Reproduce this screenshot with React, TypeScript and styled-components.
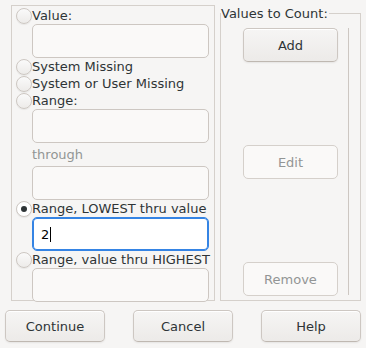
import React from "react";
import styled, { createGlobalStyle } from "styled-components";

const GlobalStyle = createGlobalStyle`
  html, body {
    margin: 0;
    padding: 0;
    background: #f6f5f4;
  }
  * {
    box-sizing: border-box;
  }
`;

const App = () => {
  return (
    <>
      <GlobalStyle />
      <Dialog>
        <TopRow>
          <OldFrame>
            <RadioRow>
              <Radio />
              Value:
            </RadioRow>
            <Entry />
            <RadioRow>
              <Radio />
              System Missing
            </RadioRow>
            <RadioRow>
              <Radio />
              System or User Missing
            </RadioRow>
            <RadioRow>
              <Radio />
              Range:
            </RadioRow>
            <Entry />
            <Through>through</Through>
            <Entry />
            <RadioRow>
              <Radio checked />
              Range, LOWEST thru value
            </RadioRow>
            <Entry focused>
              2<Caret />
            </Entry>
            <RadioRow>
              <Radio />
              Range, value thru HIGHEST
            </RadioRow>
            <Entry />
          </OldFrame>
          <CountFrame>
            <Legend>Values to Count:</Legend>
            <CountBody>
              <ButtonColumn>
                <Button>Add</Button>
                <Button disabled>Edit</Button>
                <Button disabled>Remove</Button>
              </ButtonColumn>
              <ListLine />
            </CountBody>
          </CountFrame>
        </TopRow>
        <ButtonRow>
          <Button wide>Continue</Button>
          <Button wide>Cancel</Button>
          <Button wide>Help</Button>
        </ButtonRow>
      </Dialog>
    </>
  );
};

export default App;

const Dialog = styled.div`
  width: 366px;
  height: 348px;
  padding: 5px 5px 6px 5px;
  display: flex;
  flex-direction: column;
  font-family: "DejaVu Sans", sans-serif;
  font-size: 13px;
  color: #2e3436;
  background: #f6f5f4;
`;

const TopRow = styled.div`
  display: flex;
  gap: 5px;
  margin-left: 6px;
  height: 296px;
`;

const OldFrame = styled.div`
  width: 204px;
  height: 296px;
  border: 1px solid #d5d0cb;
  padding: 1px 0 0 4px;
  display: flex;
  flex-direction: column;
`;

const RadioRow = styled.label`
  display: flex;
  align-items: center;
  height: 17px;
  line-height: 17px;
  white-space: nowrap;
`;

const Radio = styled.span<{ checked?: boolean }>`
  width: 16px;
  height: 16px;
  border-radius: 50%;
  border: 1px solid #cdc7c2;
  background: ${(p) =>
    p.checked ? "#ffffff" : "linear-gradient(to bottom, #fafafa, #edebe9)"};
  box-shadow: 0 1px 1px rgba(0, 0, 0, 0.06);
  display: flex;
  align-items: center;
  justify-content: center;
  flex-shrink: 0;
  &::after {
    content: "";
    display: ${(p) => (p.checked ? "block" : "none")};
    width: 6px;
    height: 6px;
    border-radius: 50%;
    background: #2e3436;
  }
`;

const Entry = styled.div<{ focused?: boolean }>`
  margin-left: 16px;
  width: 177px;
  height: 34px;
  flex-shrink: 0;
  border-radius: 5px;
  border: 1px solid ${(p) => (p.focused ? "#3584e4" : "#cdc7c2")};
  box-shadow: ${(p) => (p.focused ? "inset 0 0 0 1px #3584e4" : "none")};
  background: ${(p) => (p.focused ? "#ffffff" : "#faf9f8")};
  color: #000000;
  display: flex;
  align-items: center;
  padding-left: 8px;
`;

const Caret = styled.span`
  width: 1px;
  height: 15px;
  background: #000000;
  margin-left: 1px;
`;

const Through = styled.div`
  margin-left: 16px;
  height: 23px;
  line-height: 23px;
  color: #929595;
`;

const CountFrame = styled.fieldset`
  width: 141px;
  height: 296px;
  margin: 0;
  padding: 0;
  border: 1px solid #d5d0cb;
  display: flex;
  flex-direction: column;
  min-width: 0;
`;

const Legend = styled.legend`
  padding: 0 1px 0 0;
  margin: 0;
  line-height: 17px;
  font-size: 13px;
`;

const CountBody = styled.div`
  flex: 1;
  display: flex;
  padding: 6px 11px 4px 22px;
  gap: 10px;
`;

const ButtonColumn = styled.div`
  width: 95px;
  display: flex;
  flex-direction: column;
  justify-content: space-between;
`;

const ListLine = styled.div`
  width: 1px;
  background: #cdc7c2;
  margin-bottom: 1px;
`;

const ButtonRow = styled.div`
  margin-top: 9px;
  display: flex;
  justify-content: space-between;
`;

const Button = styled.button<{ wide?: boolean }>`
  width: ${(p) => (p.wide ? "100px" : "95px")};
  height: ${(p) => (p.wide ? "32px" : "34px")};
  font-family: "DejaVu Sans", sans-serif;
  font-size: 13px;
  color: #2e3436;
  border: 1px solid #cdc7c2;
  border-bottom-color: #bfb8b1;
  border-radius: 5px;
  background: linear-gradient(to top, #edebe9 2px, #f6f5f4);
  box-shadow: inset 0 1px #ffffff, 0 1px 2px rgba(0, 0, 0, 0.07);
  padding: 0;
  &:disabled {
    color: #929595;
    background: #faf9f8;
    border-color: #d5d0cb;
    box-shadow: none;
  }
`;
